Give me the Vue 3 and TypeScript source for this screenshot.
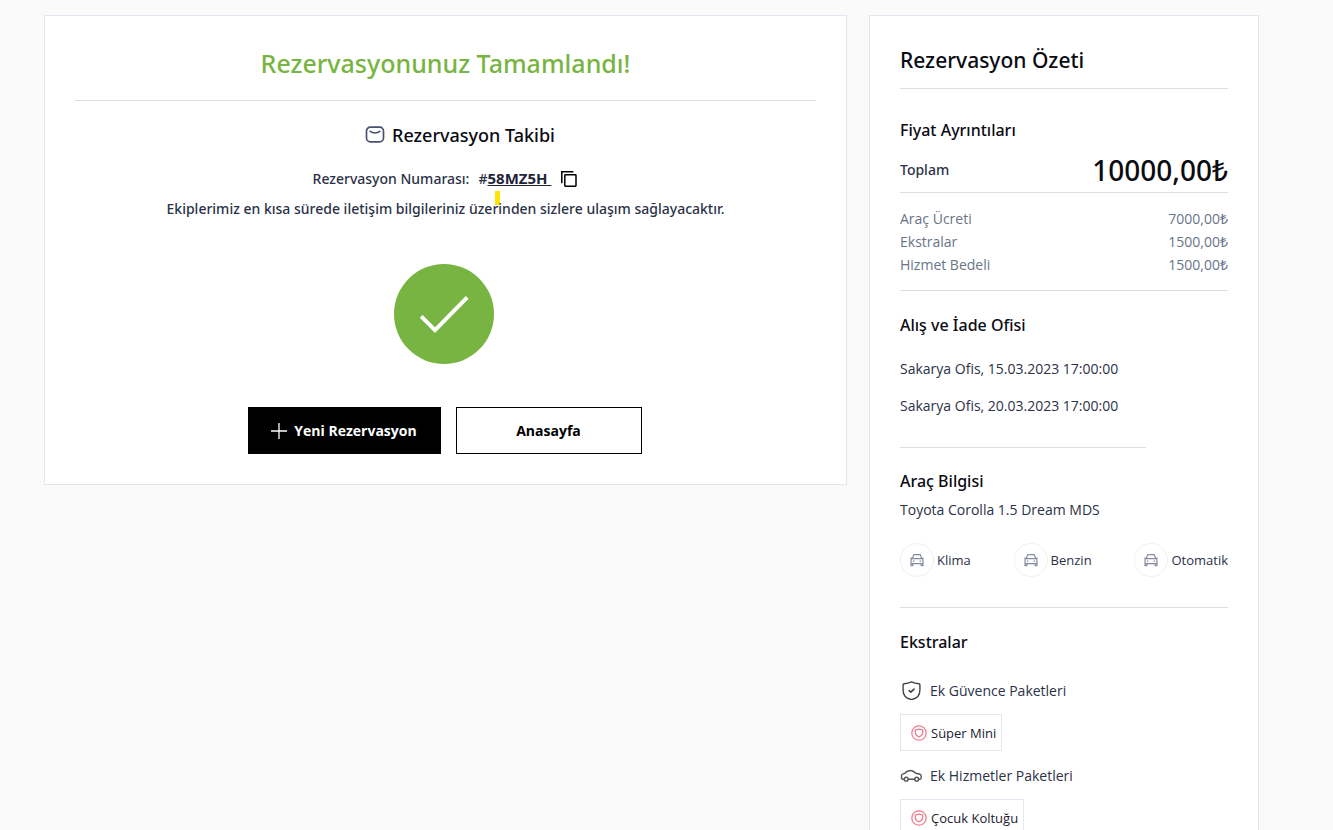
<script setup lang="ts">
interface PriceRow {
  label: string
  amount: string
}

interface ExtraGroup {
  title: string
  icon: 'shield' | 'car'
  items: string[]
}

const reservationCode = '58MZ5H'

const prices: PriceRow[] = [
  { label: 'Araç Ücreti', amount: '7000,00₺' },
  { label: 'Ekstralar', amount: '1500,00₺' },
  { label: 'Hizmet Bedeli', amount: '1500,00₺' },
]

const offices: string[] = [
  'Sakarya Ofis, 15.03.2023 17:00:00',
  'Sakarya Ofis, 20.03.2023 17:00:00',
]

const features: string[] = ['Klima', 'Benzin', 'Otomatik']

const extras: ExtraGroup[] = [
  { title: 'Ek Güvence Paketleri', icon: 'shield', items: ['Süper Mini'] },
  { title: 'Ek Hizmetler Paketleri', icon: 'car', items: ['Çocuk Koltuğu'] },
]

function copyCode(): void {
  navigator.clipboard?.writeText(reservationCode)
}
</script>

<template>
  <div class="page">
    <main class="panel done">
      <h1 class="done-title">Rezervasyonunuz Tamamlandı!</h1>
      <h2 class="track">
        <svg width="20" height="18" viewBox="0 0 20 18" fill="none" stroke="#4a5070" stroke-width="1.7" stroke-linecap="round" aria-hidden="true">
          <rect x="1.5" y="1.2" width="17" height="14.6" rx="3.8" />
          <path d="M5.2 5.4c2.6 2.1 6.9 2.1 9.6 0" />
        </svg>
        Rezervasyon Takibi
      </h2>
      <p class="number">
        <span>Rezervasyon Numarası:</span>
        <span class="code">#<a href="#">{{ reservationCode }}&nbsp;</a><i class="marker"></i></span>
        <button class="copy" type="button" aria-label="Kopyala" @click="copyCode">
          <svg width="18" height="18" viewBox="0 0 18 18" fill="none" stroke="#000" stroke-width="1.5" aria-hidden="true">
            <path d="M1.8 13.2V1.8H13.4" />
            <rect x="4.8" y="4.8" width="11.2" height="11.4" rx="0.6" />
          </svg>
        </button>
      </p>
      <p class="note">Ekiplerimiz en kısa sürede iletişim bilgileriniz üzerinden sizlere ulaşım sağlayacaktır.</p>
      <svg class="check" width="100" height="100" viewBox="0 0 100 100" aria-hidden="true">
        <circle cx="50" cy="50" r="50" fill="#78b441" />
        <path d="M27.2 52.3 41 66.2 73.2 33.4" fill="none" stroke="#fff" stroke-width="4" />
      </svg>
      <div class="actions">
        <button class="btn primary" type="button">
          <svg width="16" height="16" viewBox="0 0 16 16" fill="none" stroke="#fff" stroke-width="1.3" aria-hidden="true">
            <path d="M8 0v16M0 8h16" />
          </svg>
          Yeni Rezervasyon
        </button>
        <button class="btn secondary" type="button">Anasayfa</button>
      </div>
    </main>

    <aside class="panel summary">
      <h2 class="summary-title">Rezervasyon Özeti</h2>

      <section class="prices">
        <h3>Fiyat Ayrıntıları</h3>
        <div class="total">
          <span>Toplam</span>
          <strong>10000,00₺</strong>
        </div>
        <dl>
          <div v-for="row in prices" :key="row.label" class="price">
            <dt>{{ row.label }}</dt>
            <dd>{{ row.amount }}</dd>
          </div>
        </dl>
      </section>

      <section class="offices">
        <h3>Alış ve İade Ofisi</h3>
        <p v-for="office in offices" :key="office">{{ office }}</p>
      </section>

      <section class="vehicle">
        <h3>Araç Bilgisi</h3>
        <p>Toyota Corolla 1.5 Dream MDS</p>
        <ul class="features">
          <li v-for="feature in features" :key="feature">
            <span class="round">
              <svg width="14" height="14" viewBox="0 0 14 14" fill="none" stroke="#858aa0" stroke-width="1.2" stroke-linejoin="round" aria-hidden="true">
                <path d="M2.4 5.6 3.4 2.3Q3.6 1.6 4.4 1.6H9.6Q10.4 1.6 10.6 2.3L11.6 5.6M0.4 4.9 1.8 5.6H12.2L13.6 4.9M1.8 5.6Q1 6.4 1 7.4V12.6H2.8V10.6H11.2V12.6H13V7.4Q13 6.4 12.2 5.6M1 10.6H13M2.8 8.1H4.4M9.6 8.1H11.2" />
              </svg>
            </span>
            {{ feature }}
          </li>
        </ul>
      </section>

      <section class="extras">
        <h3>Ekstralar</h3>
        <div v-for="group in extras" :key="group.title" class="group">
          <h4>
            <svg v-if="group.icon === 'shield'" width="22" height="20" viewBox="0 0 22 20" fill="none" stroke="#444" stroke-width="1.4" stroke-linecap="round" stroke-linejoin="round" aria-hidden="true">
              <path d="M11.5 .9Q14.8 2.6 18.8 2.7 19.9 2.8 19.9 3.8V9C19.9 14 16.8 17.3 12.5 18.3Q11.5 18.5 10.5 18.3C6.2 17.3 3.1 14 3.1 9V3.8Q3.1 2.8 4.2 2.7 8.2 2.6 11.5 .9Z" />
              <path d="M9.2 9.7 10.8 11.2 14 8.1" stroke-width="1.7" />
            </svg>
            <svg v-else width="22" height="20" viewBox="0 0 22 20" fill="none" stroke="#555" stroke-width="1.4" stroke-linecap="round" stroke-linejoin="round" aria-hidden="true">
              <path d="M4.2 13.2H2.9Q1.5 13.2 1.5 11.8V9.7Q1.5 8.3 2.9 7.9L4.7 7.3Q7 4.5 10.5 4.5 13 4.5 15.9 7.3L19.3 8Q21.2 8.5 21.2 10.3V11.8Q21.2 13.2 19.9 13.2H18.7M8.2 13.2H14.7" />
              <circle cx="6.2" cy="13.2" r="1.9" />
              <circle cx="16.7" cy="13.2" r="1.9" />
            </svg>
            {{ group.title }}
          </h4>
          <ul class="tags">
            <li v-for="item in group.items" :key="item">
              <svg width="16" height="16" viewBox="0 0 16 16" fill="none" stroke="#ee8090" stroke-width="1.3" stroke-linejoin="round" aria-hidden="true">
                <circle cx="8" cy="8" r="7.2" />
                <path d="M8 4.1Q9.7 4.8 11.7 4.9V7.8Q11.5 10.6 8 11.9 4.5 10.6 4.3 7.8V4.9Q6.3 4.8 8 4.1Z" stroke-width="1.4" />
              </svg>
              {{ item }}
            </li>
          </ul>
        </div>
      </section>
    </aside>
  </div>
</template>

<style>
body {
  margin: 0;
  background: #fafafa;
}
</style>

<style scoped>
.page {
  display: grid;
  grid-template-columns: minmax(0, 1fr) 390px;
  align-items: start;
  gap: 22px;
  padding: 15px 74px 30px 44px;
  font-family: "Open Sans", "Noto Sans", sans-serif;
  font-size: 14px;
  line-height: 24px;
  color: #2b3147;
}

h1, h2, h3, h4, p, dl, dd, ul {
  margin: 0;
  padding: 0;
}

ul {
  list-style: none;
}

svg {
  flex: none;
}

.panel {
  box-sizing: border-box;
  padding: 30px;
  background: #fff;
  border: 1px solid #e5e5ef;
}

.done {
  display: flex;
  flex-direction: column;
  align-items: center;
  text-align: center;
}

.done-title,
.track,
.number,
.note,
.summary-title,
.total,
h3 {
  font-family: "Noto Sans", "Open Sans", sans-serif;
  font-weight: 500;
}

.done-title {
  align-self: stretch;
  padding-bottom: 20px;
  border-bottom: 1px solid #dddde5;
  font-size: 25px;
  line-height: 34px;
  color: #78b441;
}

.track {
  display: flex;
  align-items: center;
  gap: 7px;
  margin-top: 20px;
  padding-left: 29px;
  font-size: 18px;
  line-height: 28px;
  color: #0b0b12;
}

.number {
  display: flex;
  align-items: center;
  gap: 9px;
  margin-top: 17px;
}

.code {
  position: relative;
}

.code a {
  font-size: 15px;
  color: #1f2539;
  font-weight: 700;
}

.marker {
  position: absolute;
  top: 25px;
  left: 17px;
  width: 5px;
  height: 14px;
  background: #ffe600;
}

.copy {
  display: flex;
  padding: 0;
  border: 0;
  background: none;
  cursor: pointer;
}

.note {
  position: relative;
  margin-top: 6px;
}

.check {
  margin-top: 43px;
  margin-right: 3px;
}

.actions {
  display: flex;
  gap: 15px;
  margin-top: 43px;
  margin-right: 2px;
}

.btn {
  display: flex;
  align-items: center;
  justify-content: center;
  gap: 7px;
  box-sizing: border-box;
  height: 47px;
  padding: 0;
  border: 1px solid #000;
  font: inherit;
  font-weight: 700;
  cursor: pointer;
}

.primary {
  width: 193px;
  background: #000;
  color: #fff;
}

.secondary {
  width: 186px;
  background: #fff;
  color: #000;
}

.summary-title {
  padding-bottom: 14px;
  border-bottom: 1px solid #dddde5;
  font-size: 21px;
  line-height: 28px;
  color: #0b0b12;
}

h3 {
  font-size: 16px;
  color: #0b0b12;
}

.prices {
  padding: 29px 0 14px;
  border-bottom: 1px solid #dddde5;
}

.total {
  display: flex;
  align-items: center;
  justify-content: space-between;
  height: 44px;
  margin-top: 6px;
  border-bottom: 1px solid #dddde5;
}

.total strong {
  font-size: 28px;
  font-weight: 500;
  color: #0b0b12;
}

.prices dl {
  margin-top: 14px;
}

.price {
  display: flex;
  justify-content: space-between;
  line-height: 23px;
  color: #697488;
}

.offices {
  padding-top: 22px;
}

.offices h3 {
  margin-bottom: 20px;
}

.offices p + p {
  margin-top: 13px;
}

.offices::after {
  content: "";
  display: block;
  width: 75%;
  margin-top: 29px;
  border-bottom: 1px solid #dddde5;
}

.vehicle {
  padding: 21px 0 30px;
  border-bottom: 1px solid #dddde5;
}

.vehicle p {
  margin-top: 5px;
}

.features {
  display: flex;
  justify-content: space-between;
  margin-top: 21px;
  font-size: 13px;
}

.features li {
  display: flex;
  align-items: center;
  gap: 3px;
}

.round {
  display: flex;
  align-items: center;
  justify-content: center;
  box-sizing: border-box;
  width: 34px;
  height: 34px;
  border: 1px solid #f0f0f6;
  border-radius: 50%;
}

.extras {
  padding-top: 22px;
}

.extras h3 {
  margin-bottom: 25px;
}

.group + .group {
  margin-top: 13px;
}

h4 {
  display: flex;
  align-items: center;
  gap: 8px;
  font-size: 14px;
  font-weight: 400;
}

.tags {
  display: flex;
  margin-top: 11px;
  font-size: 13px;
  color: #1c2030;
}

.tags li {
  display: flex;
  align-items: center;
  gap: 4px;
  box-sizing: border-box;
  height: 37px;
  padding: 0 5px 0 10px;
  border: 1px solid #e5e5ef;
}
</style>
